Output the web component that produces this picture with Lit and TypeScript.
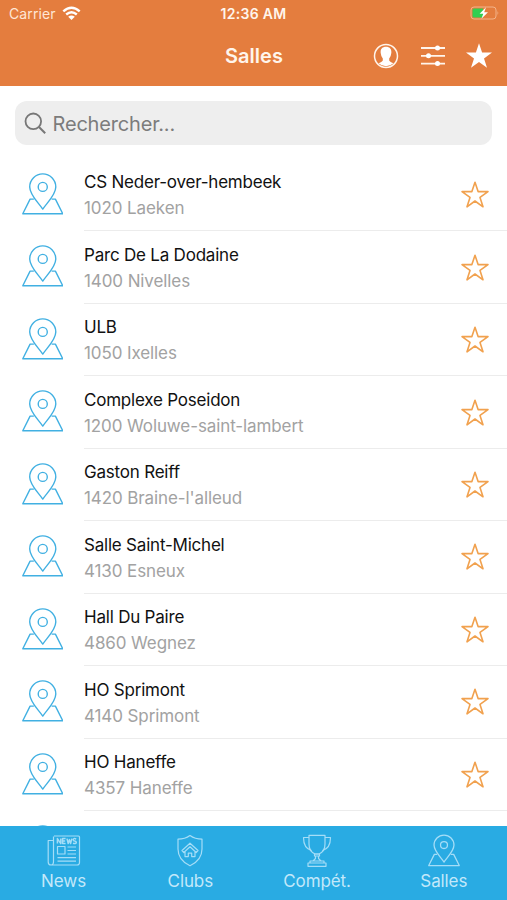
import { LitElement, html, css, svg } from "lit";
import { customElement } from "lit/decorators.js";

const VENUES: [string, string][] = [
  ["CS Neder-over-hembeek", "1020 Laeken"],
  ["Parc De La Dodaine", "1400 Nivelles"],
  ["ULB", "1050 Ixelles"],
  ["Complexe Poseidon", "1200 Woluwe-saint-lambert"],
  ["Gaston Reiff", "1420 Braine-l'alleud"],
  ["Salle Saint-Michel", "4130 Esneux"],
  ["Hall Du Paire", "4860 Wegnez"],
  ["HO Sprimont", "4140 Sprimont"],
  ["HO Haneffe", "4357 Haneffe"],
  ["", ""],
];

const STAR =
  "M15 2.2 L18.1 11.6 H28 L20 17.4 L23 26.8 L15 21 L7 26.8 L10 17.4 L2 11.6 H11.9 Z";

const pinShape = svg`
  <path d="M21 36.3 C17 30 7.8 22 7.8 13.8 A13.2 13.2 0 0 1 34.2 13.8 C34.2 22 25 30 21 36.3 Z" />
  <circle cx="21" cy="13.8" r="4.6" />
  <path d="M12 26.2 H8.2 L0.8 41 H41.2 L33.8 26.2 H30" />`;

const pinIcon = html`<svg class="pin" viewBox="0 0 42 42">${pinShape}</svg>`;

const newsIcon = html`<svg class="tab-icon" viewBox="0 0 34 34">
  <path d="M7 2 H31.5 Q32.5 2 32.5 3 V28.5 Q32.5 31 30 31 H4 Q1.2 31 1.2 28 V6.5 H6.5 M6.5 2.5 V27.5 Q6.5 31 4 31" />
  <path d="M10.5 12.5 H18 V20 H10.5 Z M20.5 13 H29 M20.5 16.5 H29 M20.5 20 H29 M10.5 23.6 H29 M10.5 27.2 H29" />
  <path d="M10.4 9.6 V4.6 L13.8 9.6 V4.6 M18.6 4.6 H15.6 V9.6 H18.6 M15.6 7.1 H18.2 M20 4.6 L21.2 9.6 L22.4 5.6 L23.6 9.6 L24.8 4.6 M29.2 5 Q26.2 3.9 26.2 5.8 Q26.2 7 27.7 7.1 Q29.3 7.3 29.3 8.5 Q29 10.2 26 9.2" stroke-width="1.5" />
</svg>`;

const clubsIcon = html`<svg class="tab-icon" viewBox="0 0 34 34">
  <path d="M17 1.5 Q22 5.2 29 5.2 V15 C29 23.5 24 28.5 17 31.8 C10 28.5 5 23.5 5 15 V5.2 Q12 5.2 17 1.5 Z" />
  <path d="M17 9.2 L25 16.5 L23.2 18.5 L17 12.8 L10.8 18.5 L9 16.5 Z M12 18 V22.6 H15.3 V19.2 H18.7 V22.6 H22 V18" />
</svg>`;

const cupIcon = html`<svg class="tab-icon" viewBox="0 0 34 34">
  <path d="M9 1.4 H25 V10 C25 15 22.5 18.5 19 20 H15 C11.5 18.5 9 15 9 10 Z" />
  <path d="M9 3.5 H3.5 C3.5 10.5 6 15 11.6 16.6 M25 3.5 H30.5 C30.5 10.5 28 15 22.4 16.6" />
  <path d="M14.5 20 H19.5 V22 H14.5 Z M15.5 22 V24.5 L13 27 M18.5 22 V24.5 L21 27 M10 27 H24 V29 H10 Z M8 29 H26 V32.3 H8 Z" />
</svg>`;

const tabPin = html`<svg class="tab-icon" viewBox="-1.5 -0.8 45 45"><g stroke-width="1.7">${pinShape}</g></svg>`;

const TABS = [
  { label: "News", icon: newsIcon },
  { label: "Clubs", icon: clubsIcon },
  { label: "Compét.", icon: cupIcon },
  { label: "Salles", icon: tabPin },
];

@customElement("app-root")
export class AppRoot extends LitElement {
  static styles = css`
    :host {
      display: flex;
      flex-direction: column;
      height: 900px;
      width: 507px;
      overflow: hidden;
      background: #fff;
      font-family: Inter, "Liberation Sans", sans-serif;
      color: #111;
    }
    * { box-sizing: border-box; }
    svg { display: block; fill: none; flex: none; }
    header { flex: none; height: 86px; background: #e47d3e; color: #fff5ec; }
    .status, .bar {
      display: grid;
      grid-template-columns: 1fr auto 1fr;
      align-items: center;
    }
    .status { height: 28px; padding: 0 7px 0 9px; font-size: 14px; line-height: 28px; }
    .carrier { display: flex; align-items: center; gap: 6px; color: #ffe6d5; letter-spacing: 0.1px; }
    .time { font-weight: 600; letter-spacing: 0.32px; margin-right: 2px; }
    .wifi { width: 19px; height: 15px; margin-top: -2px; }
    .battery { width: 31px; height: 16px; justify-self: end; margin-top: -2px; }
    .bar { height: 56px; padding: 0 14px 0 15px; }
    .bar h1 { grid-column: 2; margin: 0; font-size: 20px; font-weight: 600; letter-spacing: 0; }
    .actions { display: flex; align-items: center; justify-content: flex-end; gap: 21px; }
    .user, .filters { width: 26px; height: 26px; }
    .fav { width: 28px; height: 28px; margin-left: -2px; }
    .search {
      flex: none;
      display: flex;
      align-items: center;
      gap: 5.5px;
      height: 44px;
      margin: 15px 15px 14px;
      padding-left: 9px;
      border-radius: 12px;
      background: #eee;
      color: #7c7c7c;
      font-size: 20px;
      letter-spacing: -0.18px;
    }
    .search span { padding-top: 1px; }
    .lens { width: 23px; height: 23px; }
    .list { flex: 1; min-height: 0; overflow: hidden; }
    .row { display: flex; height: 72.46px; padding-left: 21.5px; }
    .pin { width: 41.5px; height: 42px; margin: 14px 21px 0 0; stroke: #41b0e2; stroke-width: 1.4; stroke-linejoin: round; }
    .body {
      flex: 1;
      display: flex;
      justify-content: space-between;
      border-bottom: 1.5px solid #ececec;
      padding-right: 17px;
    }
    .name, .place { line-height: 26px; white-space: nowrap; }
    .name { padding-top: 10.4px; font-size: 17px; letter-spacing: -0.21px; }
    .place { font-size: 17px; letter-spacing: -0.1px; color: #a2a2a2; }
    .star { width: 30px; height: 30px; margin-top: 21.2px; stroke: #f1a14e; stroke-width: 1.6; stroke-linejoin: round; }
    nav {
      flex: none;
      display: grid;
      grid-template-columns: repeat(4, 1fr);
      height: 74px;
      background: #29abe3;
      color: #c3e8fa;
    }
    .tab { display: flex; flex-direction: column; align-items: center; padding: 7.5px 0 0 0.4px; font-size: 17px; line-height: 24px; letter-spacing: -0.1px; }
    .tab-icon { width: 34px; height: 34px; margin-bottom: 1.5px; stroke: #a5ddf7; stroke-width: 1.2; stroke-linejoin: round; }
  `;

  render() {
    return html`
      <header>
        <div class="status">
          <span class="carrier">Carrier
            <svg class="wifi" viewBox="0 0 19 15">
              <path d="M1.3 5.4 Q9.5 -2 17.7 5.4 M4.2 8.5 Q9.5 3.9 14.8 8.5" stroke="#fff" stroke-width="2.4" />
              <path d="M9.5 14 L6.2 10.8 Q9.5 8 12.8 10.8 Z" fill="#fff" />
            </svg>
          </span>
          <span class="time">12:36 AM</span>
          <svg class="battery" viewBox="0 0 31 16">
            <rect x="2" y="2" width="25" height="12" rx="3" stroke="#f3b48a" />
            <path d="M28.5 6 Q30.3 8 28.5 10 Z" fill="#f3b48a" />
            <path d="M5 3.5 H14 V12.5 H5 Q3.5 12.5 3.5 11 V5 Q3.5 3.5 5 3.5 Z" fill="#32cf51" />
            <path d="M17 2.3 L10.6 8.8 H14.3 L12.4 13.8 L19 7.2 H15.2 Z" fill="#fff" />
          </svg>
        </div>
        <div class="bar">
          <h1>Salles</h1>
          <div class="actions">
            <svg class="user" viewBox="0 0 26 26">
              <circle cx="13" cy="13" r="11.5" stroke="#fff5ec" stroke-width="1.5" />
              <path d="M13 3.8 C17 3.8 18.7 6.4 18.3 10 Q18 13.5 16.2 15.5 V17.6 Q16.5 18.8 20.4 20.3 A10.8 10.8 0 0 1 5.6 20.3 Q9.5 18.8 9.8 17.6 V15.5 Q8 13.5 7.7 10 C7.3 6.4 9 3.8 13 3.8 Z" fill="#fff" />
            </svg>
            <svg class="filters" viewBox="0 0 26 26">
              <path d="M1 5 H25 M1 12.8 H25 M1 20.6 H25" stroke="#fff5ec" stroke-width="1.8" />
              <g fill="#fff"><circle cx="17.5" cy="5" r="2.5" /><circle cx="8.5" cy="12.8" r="2.5" /><circle cx="17.5" cy="20.6" r="2.5" /></g>
            </svg>
            <svg class="fav" viewBox="1 1 28 28"><path d=${STAR} fill="#fff" /></svg>
          </div>
        </div>
      </header>
      <div class="search">
        <svg class="lens" viewBox="0 0 23 23">
          <circle cx="9.3" cy="9.3" r="7.8" stroke="#777" stroke-width="1.8" />
          <path d="M15 15 L21.2 21.2" stroke="#777" stroke-width="2" />
        </svg>
        <span>Rechercher...</span>
      </div>
      <div class="list">
        ${VENUES.map(
          ([name, place]) => html`<div class="row">
            ${pinIcon}
            <div class="body">
              <div><div class="name">${name}</div><div class="place">${place}</div></div>
              <svg class="star" viewBox="0 0 30 30"><path d=${STAR} /></svg>
            </div>
          </div>`
        )}
      </div>
      <nav>${TABS.map((t) => html`<div class="tab">${t.icon}<span>${t.label}</span></div>`)}</nav>
    `;
  }
}
